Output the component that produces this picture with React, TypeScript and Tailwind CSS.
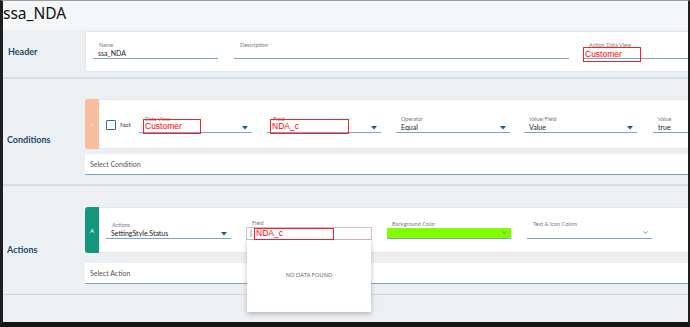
import { ChevronDown } from 'lucide-react';

const font = { fontFamily: 'Lato, "Noto Sans", sans-serif' };

function Caret() {
    return (
        <svg width="6" height="4" viewBox="0 0 6 4" className="shrink-0">
            <polygon points="0,0 6,0 3,3.5" fill="#1f5d86" />
        </svg>
    );
}

// red markup boxes drawn over the screenshot
function Mark({ text, className }: { text: string; className: string }) {
    return (
        <div
            className={`absolute border-[1.5px] border-[#ff1f1f] text-[8.5px] leading-none text-[#ff0000] pl-[1px] flex items-center ${className}`}
            style={{ fontFamily: '"Liberation Sans", Arial, sans-serif' }}
        >
            {text}
        </div>
    );
}

function Field({ label, value, w, caret, lpad = 'pl-[6px]', vpad = 'pl-[5px]', children }: {
    label: string; value?: string; w: string; caret?: boolean; lpad?: string; vpad?: string; children?: React.ReactNode;
}) {
    return (
        <div className={`relative flex flex-col shrink-0 ${w}`}>
            <div className={`text-[5.5px] leading-[8px] text-[#7a7a7a] ${lpad}`}>{label}</div>
            <div className={`flex items-center justify-between h-[10px] border-b border-[#7aa5c0] pr-[4px] ${vpad}`}>
                <span className="text-[7px] leading-none text-[#222]">{value}</span>
                {caret && <Caret />}
            </div>
            {children}
        </div>
    );
}

export default function App() {
    return (
        <div
            className="w-[690px] h-[327px] overflow-hidden bg-[#edf0f3] border-t border-t-[#9c9c9c] border-l-[3px] border-l-[#1e1e1e] border-r-[2px] border-r-[#1e1e1e] border-b-[5px] border-b-[#141414]"
            style={font}
        >
            {/* title */}
            <div className="h-[29px] bg-[#f4f6f8] flex items-center">
                <div className="text-[15.5px] leading-none text-[#111] -mt-[3px]" style={{ fontFamily: '"Noto Sans", sans-serif' }}>ssa_NDA</div>
            </div>

            {/* Header */}
            <div className="flex pt-[1px] pb-[5px] border-b-2 border-[#d6dee4]">
                <div className="w-[82px] shrink-0 flex items-center pl-[5px]">
                    <span className="text-[9px] font-bold text-[#1d4867]">Header</span>
                </div>
                <div className="flex-1 h-[41px] bg-white border border-[#e2e7eb] border-r-0 flex items-start pt-[9px] pl-[7px]">
                    <Field label="Name" value="ssa_NDA" w="w-[125px]" />
                    <Field label="Description" w="w-[335px] ml-[16px]" />
                    <div className="relative ml-[14px] flex-1">
                        <Field label="Action Data View" w="w-full" lpad="pl-[6px]" />
                        <Mark text="Customer" className="left-0 top-[6px] w-[58px] h-[15px]" />
                    </div>
                </div>
            </div>

            {/* Conditions */}
            <div className="flex pt-[20px] pb-[9px] border-b-2 border-[#d6dee4]">
                <div className="w-[82px] shrink-0 flex items-center pl-[4px] pt-[5px]">
                    <span className="text-[9px] font-bold text-[#1d4867]">Conditions</span>
                </div>
                <div className="flex-1 flex flex-col gap-[5px]">
                    <div className="h-[50px] flex bg-white border border-[#e2e7eb] border-r-0 rounded-l-[3px]">
                        <div className="w-[14px] -my-px -ml-px bg-[#f8bc9e] rounded-l-[3px] flex items-center justify-center text-white text-[6px]">&lt;</div>
                        <div className="flex items-center">
                            <div className="w-[33px] ml-[7px] flex items-center gap-[4px] mt-[1px]">
                                <div className="w-[10px] h-[10px] border-[1.5px] border-[#2b6f99] rounded-[1px]" />
                                <span className="text-[6.5px] text-[#444]">Not</span>
                            </div>
                            <Field label="Data View" w="w-[113px]" caret>
                                <Mark text="Customer" className="left-[4px] top-[4px] w-[58px] h-[15px]" />
                            </Field>
                            <Field label="Field" w="w-[114px] ml-[15px]" caret>
                                <Mark text="NDA_c" className="left-[3px] top-[4px] w-[79px] h-[15px]" />
                            </Field>
                            <Field label="Operator" value="Equal" w="w-[114px] ml-[15px]" caret lpad="pl-[5px]" />
                            <Field label="Value/Field" value="Value" w="w-[113px] ml-[14px]" caret lpad="pl-[5px]" />
                            <Field label="Value" value="true" w="w-[60px] ml-[16px]" lpad="pl-[5px]" />
                        </div>
                    </div>
                    <div className="h-[21px] bg-white border-b-[1.5px] border-[#7aa5c0] flex items-center pl-[5px]">
                        <span className="text-[7px] text-[#555]">Select Condition</span>
                    </div>
                </div>
            </div>

            {/* Actions */}
            <div className="flex pt-[21px] pb-[10px] border-b border-[#cddbe0]">
                <div className="w-[82px] shrink-0 flex items-center pl-[4px] pt-[8px]">
                    <span className="text-[9px] font-bold text-[#1d4867]">Actions</span>
                </div>
                <div className="flex-1 flex flex-col gap-[10px]">
                    <div className="relative z-10 h-[46px] flex bg-white border border-[#e2e7eb] border-r-0 rounded-l-[3px]">
                        <div className="w-[14px] -my-px -ml-px bg-[#14967f] rounded-l-[3px] flex items-center justify-center text-white text-[6px]">A</div>
                        <div className="flex items-center">
                            <Field label="Actions" value="SettingStyle.Status" w="w-[125px] ml-[7px]" caret />
                            <div className="relative w-[126px] ml-[15px] flex flex-col -mt-[1px]">
                                <div className="text-[5.5px] leading-[7px] text-[#7a7a7a] pl-[6px]">Field</div>
                                <div className="h-[13px] border border-[#d7b9c9] flex items-center pl-[3px]">
                                    <span className="text-[8px] leading-none text-[#555]">|</span>
                                </div>
                                <Mark text="NDA_c" className="left-[8px] top-[8px] w-[80px] h-[12px]" />
                                {/* dropdown */}
                                <div className="absolute left-[1px] top-[20px] w-[124px] h-[72px] bg-white shadow-[0_2px_5px_rgba(0,0,0,0.25)] flex items-center justify-center">
                                    <span className="text-[5.5px] text-[#666] tracking-[0.1px]">NO DATA FOUND</span>
                                </div>
                            </div>
                            <div className="w-[124px] ml-[15px] flex flex-col -mt-[1px]">
                                <div className="text-[5.5px] leading-[7px] text-[#7a7a7a] pl-[5px]">Background Color</div>
                                <div className="h-[11px] bg-[#80ff00] border-b border-[#7aa5c0] flex items-center justify-end pr-[3px]">
                                    <ChevronDown size={7} strokeWidth={2.5} color="#3b7ca6" />
                                </div>
                            </div>
                            <div className="w-[125px] ml-[16px] flex flex-col -mt-[1px]">
                                <div className="text-[5.5px] leading-[7px] text-[#7a7a7a] pl-[6px]">Text &amp; Icon Colors</div>
                                <div className="h-[11px] border-b border-[#7aa5c0] flex items-center justify-end pr-[3px]">
                                    <ChevronDown size={7} strokeWidth={2.5} color="#3b7ca6" />
                                </div>
                            </div>
                        </div>
                    </div>
                    <div className="h-[21px] bg-white border-b-[1.5px] border-[#7aa5c0] flex items-center pl-[5px]">
                        <span className="text-[7px] text-[#555]">Select Action</span>
                    </div>
                </div>
            </div>
        </div>
    );
}
